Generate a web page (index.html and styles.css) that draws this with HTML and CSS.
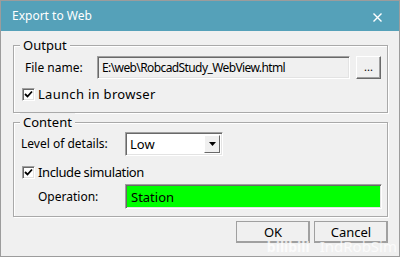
FILE: index.html
```html
<!DOCTYPE html>
<html>
<head>
<meta charset="utf-8">
<title>Export to Web</title>
<link rel="stylesheet" href="styles.css">
</head>
<body>
<div class="window">
  <div class="titlebar">
    <span class="title">Export to Web</span>
    <svg class="close" width="9" height="9" viewBox="0 0 9 9"><path d="M0.5 0.5 L8.5 8.5 M8.5 0.5 L0.5 8.5" stroke="#fff" stroke-width="1.4" fill="none"/></svg>
  </div>
  <div class="body">
    <div class="group group-output">
      <span class="legend">Output</span>
      <div class="row">
        <span class="label label-file">File name:</span>
        <div class="field field-file">E:\web\RobcadStudy_WebView.html</div>
        <div class="btn btn-browse">...</div>
      </div>
      <div class="check check-launch">
        <span class="box"><svg width="9" height="9" viewBox="0 0 9 9"><path d="M1 4 L3.5 6.5 L8 1.5" stroke="#000" stroke-width="1.8" fill="none"/></svg></span>
        <span class="check-text text-launch">Launch in browser</span>
      </div>
    </div>
    <div class="group group-content">
      <span class="legend">Content</span>
      <div class="row">
        <span class="label label-level">Level of details:</span>
        <div class="combo">
          <span class="combo-text">Low</span>
          <span class="combo-btn"><svg width="7" height="4" viewBox="0 0 7 4"><path d="M0 0 L7 0 L3.5 4 Z" fill="#000"/></svg></span>
        </div>
      </div>
      <div class="check check-sim">
        <span class="box"><svg width="9" height="9" viewBox="0 0 9 9"><path d="M1 4 L3.5 6.5 L8 1.5" stroke="#000" stroke-width="1.8" fill="none"/></svg></span>
        <span class="check-text text-sim">Include simulation</span>
      </div>
      <div class="row row-op">
        <span class="label label-op">Operation:</span>
        <div class="field field-op">Station</div>
      </div>
    </div>
    <div class="actions">
      <div class="btn btn-action">OK</div>
      <div class="btn btn-action">Cancel</div>
    </div>
  </div>
  <div class="watermark"><span class="wm-logo">bilibili</span><span class="wm-name">IndRobSim</span></div>
</div>
</body>
</html>
```
FILE: styles.css
```css
html, body {
  margin: 0;
  padding: 0;
}
body {
  font-family: "Noto Sans", "Liberation Sans", sans-serif;
  font-size: 12px;
  color: #000;
  background: #f0f0f0;
}
.window {
  position: relative;
  width: 400px;
  height: 257px;
  box-sizing: border-box;
  border: 1px solid #9c9c9c;
  background: #f0f0f0;
  overflow: hidden;
}
.titlebar {
  height: 30px;
  background: #55a1b9;
  display: flex;
  align-items: center;
  justify-content: space-between;
  padding: 0 17px 0 11px;
  color: #fff;
}
.title {
  font-size: 12px;
  line-height: 16px;
}
.close {
  display: block;
  margin-top: 2px;
}
.body {
  padding: 0 0 0 12px;
}
.group {
  position: relative;
  box-sizing: border-box;
  width: 375px;
  border: 1px solid #a9a9a9;
  box-shadow: 1px 1px 0 #fff, inset 1px 1px 0 #fff;
}
.group-output {
  margin-top: 14px;
  height: 68px;
  padding: 10px 0 0 11px;
}
.group-content {
  margin-top: 9px;
  height: 95px;
  padding: 9px 0 0 7px;
}
.legend {
  position: absolute;
  top: -10px;
  left: 6px;
  padding: 0 3px;
  background: #f0f0f0;
  font-size: 13px;
  line-height: 18px;
}
.row {
  display: flex;
  align-items: center;
}
.label {
  line-height: 16px;
}
.label-file { width: 72px; }
.label-level { width: 104px; }
.label-op {
  width: 87px;
  margin-left: 17px;
}
.field {
  box-sizing: border-box;
  border: 1px solid;
  border-color: #a0a0a0 #fff #fff #a0a0a0;
  box-shadow: inset 1px 1px 0 #696969, inset -1px -1px 0 #e3e3e3;
  padding: 0 4px;
  display: flex;
  align-items: center;
  white-space: nowrap;
}
.field-file {
  width: 253px;
  height: 23px;
  background: #f0f0f0;
  letter-spacing: -0.6px;
}
.field-op {
  width: 257px;
  height: 25px;
  background: #00ff00;
  padding-left: 5px;
  font-size: 13px;
}
.btn {
  box-sizing: border-box;
  border: 1px solid;
  border-color: #fff #696969 #696969 #fff;
  box-shadow: inset -1px -1px 0 #a0a0a0;
  background: #f0f0f0;
  display: flex;
  align-items: center;
  justify-content: center;
}
.btn-browse {
  margin-left: 6px;
  width: 25px;
  height: 23px;
  font-size: 11px;
  line-height: 10px;
  padding-bottom: 2px;
}
.check {
  display: flex;
  align-items: center;
  gap: 3px;
  font-size: 13px;
  line-height: 16px;
}
.text-launch { letter-spacing: 0.3px; }
.text-sim { letter-spacing: -0.4px; }
.check-launch {
  margin: 7px 0 0 -3px;
}
.check-sim {
  margin: 8px 0 0 1px;
}
.box {
  box-sizing: border-box;
  width: 13px;
  height: 13px;
  background: #fff;
  border: 1px solid;
  border-color: #a0a0a0 #fff #fff #a0a0a0;
  box-shadow: inset 1px 1px 0 #696969, inset -1px -1px 0 #e3e3e3;
  display: flex;
  align-items: center;
  justify-content: center;
}
.box svg { display: block; }
.combo {
  box-sizing: border-box;
  width: 98px;
  height: 24px;
  background: #fff;
  border: 1px solid;
  border-color: #a0a0a0 #fff #fff #a0a0a0;
  box-shadow: inset 1px 1px 0 #696969, inset -1px -1px 0 #e3e3e3;
  display: flex;
  align-items: center;
  justify-content: space-between;
  padding: 2px 2px 2px 4px;
}
.combo-text {
  font-size: 13px;
}
.combo-btn {
  box-sizing: border-box;
  width: 16px;
  height: 18px;
  background: #f0f0f0;
  border: 1px solid;
  border-color: #fff #696969 #696969 #fff;
  display: flex;
  align-items: center;
  justify-content: center;
}
.combo-btn svg { display: block; }
.row-op {
  margin-top: 4px;
}
.actions {
  width: 375px;
  display: flex;
  justify-content: flex-end;
  gap: 4px;
  margin-top: 4px;
}
.btn-action {
  width: 74px;
  height: 22px;
  font-size: 13px;
  border-color: #fff #696969 #696969 #fff;
  outline: 1px solid #a0a0a0;
  outline-offset: -1px;
}
.watermark {
  position: absolute;
  right: 2px;
  bottom: 0;
  display: flex;
  align-items: baseline;
  gap: 10px;
  color: rgba(255, 255, 255, 0.75);
  font-size: 15px;
  line-height: 18px;
  pointer-events: none;
}
.wm-logo {
  font-weight: bold;
  font-size: 14px;
}
```
